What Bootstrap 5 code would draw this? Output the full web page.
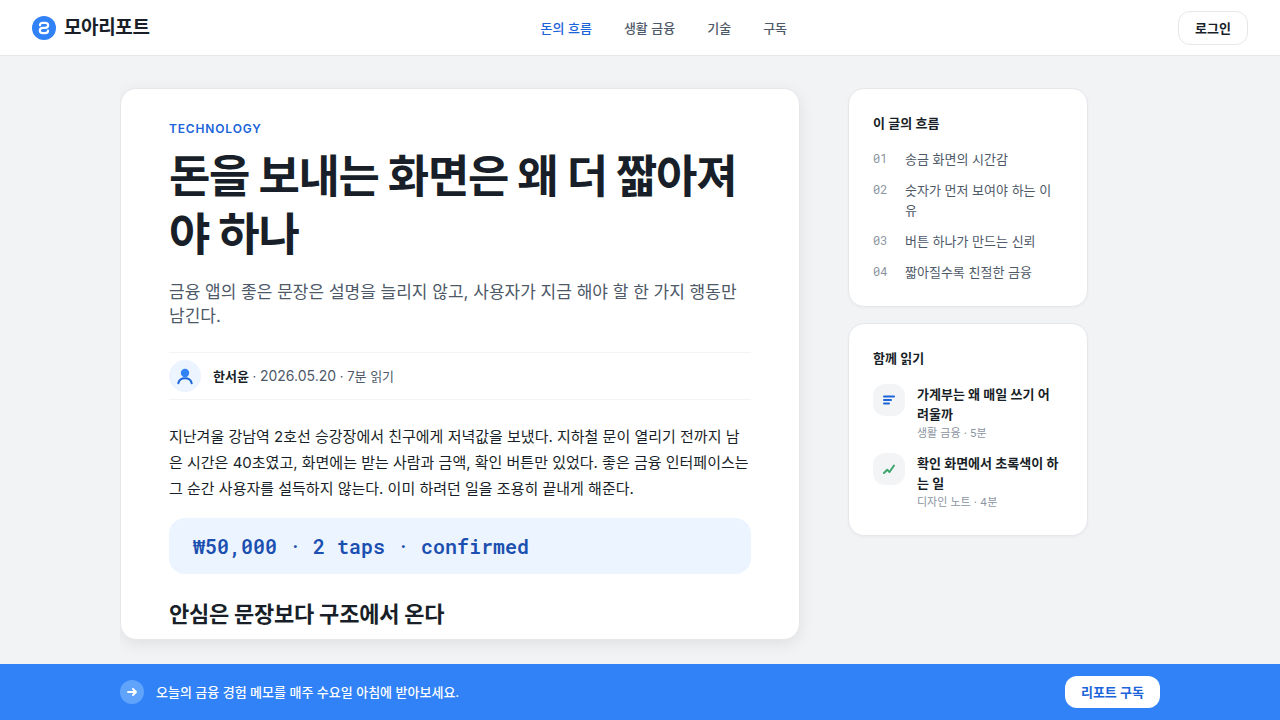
<!DOCTYPE html>
<html lang="ko">
<head>
<meta charset="utf-8">
<meta name="viewport" content="width=device-width, initial-scale=1">
<title>모아리포트</title>
<link href="https://cdn.jsdelivr.net/npm/bootstrap@5.3.0/dist/css/bootstrap.min.css" rel="stylesheet">
<style>
:root{--ink:#191f28;--sub:#4e5968;--mute:#8b95a1;--line:#e5e8eb;--soft:#f2f4f6;--brand:#3182f6;--deep:#1b64da;--tint:#ebf4ff}
body{font-family:Inter,"Noto Sans CJK KR",sans-serif;font-size:13px;line-height:20px;color:var(--ink);background:#f2f3f5}
a{text-decoration:none;color:inherit}
.topbar{min-height:56px;border-bottom:1px solid var(--line);padding:10px 32px}
.brand{font-size:19px;line-height:24px;font-weight:700;letter-spacing:-0.02em}
.topnav{gap:32px;color:var(--sub);font-weight:500}
.topnav .active{color:var(--deep)}
.pill{border-radius:12px;font-size:13px;line-height:20px;font-weight:600;padding:6px 16px}
.pill-line{border:1px solid var(--line);background:#fff;color:var(--ink)}
.pill-white{border:0;background:#fff;color:var(--deep)}
.wrap{width:100%;max-width:1040px}
.page-grid{gap:48px;padding:32px 0 24px}
.story{flex:0 1 680px;min-width:0;background:#fff;border:1px solid var(--line);border-radius:16px;padding:32px 48px 8px;box-shadow:0 4px 16px rgba(0,0,0,.08)}
.kicker{font-size:12px;line-height:15px;font-weight:600;letter-spacing:.07em;color:var(--deep);margin-bottom:12px}
.story h1{font-size:45px;line-height:58px;font-weight:700;letter-spacing:-0.03em}
.deck{font-size:17px;line-height:24px;color:var(--sub)}
.byline{border-top:1px solid var(--soft);border-bottom:1px solid var(--soft);padding:7px 0;color:var(--sub)}
.byline b{font-weight:600;color:var(--ink)}
.byline time{font-size:14px}
.prose{font-size:15px;line-height:26px}
.figure-line{font-family:"Roboto Mono","DejaVu Sans Mono",monospace;font-size:20px;line-height:24px;font-weight:600;color:#1b4fb0;background:var(--tint);border-radius:16px;padding:16px 24px}
.story h2{font-size:22px;line-height:32px;font-weight:700;letter-spacing:-0.01em}
.side{flex:0 0 240px}
.panel{background:#fff;border:1px solid var(--line);border-radius:16px;padding:24px;box-shadow:0 1px 3px rgba(0,0,0,.04)}
.panel h3{font-size:13px;line-height:20px;font-weight:600}
.toc{gap:11px;color:var(--sub)}
.toc a{gap:12px}
.toc span:first-child{flex:0 0 20px;font-family:"Roboto Mono","DejaVu Sans Mono",monospace;font-size:12px;line-height:18px;color:var(--mute)}
.reads{gap:11px}
.reads a{gap:12px}
.tile{flex:0 0 32px;height:32px;border-radius:12px;background:var(--soft)}
.reads strong{font-weight:600;padding-right:3px}
.reads small{font-size:11px;line-height:18px;color:var(--mute)}
.promo{background:var(--brand);color:#fff;padding:12px 0;font-weight:500}
@media (max-width:900px){.page-grid{flex-direction:column;padding:24px 16px}.side{flex:none}.story{flex:none;padding:24px}.topnav{display:none!important}.promo{padding:12px 16px}.story h1{font-size:32px;line-height:40px}}
</style>
</head>
<body class="d-flex flex-column min-vh-100">
<header class="topbar bg-white d-flex align-items-center justify-content-between">
  <a href="#" class="brand d-flex align-items-center gap-2">
    <svg width="24" height="24" viewBox="0 0 24 24" aria-hidden="true"><circle cx="12" cy="12" r="12" fill="#3182f6"/><path d="M8 9.300C8 7.600 9 6.900 11 6.900h2.200c2 0 2.900.8 2.900 2.400s-1 2.500-2.900 2.500h-2.400c-2 0-3 .9-3 2.700s1 2.600 3 2.600H13c2 0 3-.8 3-2.400" fill="none" stroke="#fff" stroke-width="2.200" stroke-linecap="round"/></svg>
    <span>모아리포트</span>
  </a>
  <nav class="topnav d-flex">
    <a href="#" class="active" aria-current="page">돈의 흐름</a><a href="#">생활 금융</a><a href="#">기술</a><a href="#">구독</a>
  </nav>
  <button type="button" class="pill pill-line">로그인</button>
</header>
<main class="wrap mx-auto flex-fill d-flex overflow-hidden">
  <div class="page-grid d-flex flex-fill">
    <article class="story">
      <div class="kicker">TECHNOLOGY</div>
      <h1 class="mb-3">돈을 보내는 화면은 왜 더 짧아져야 하나</h1>
      <p class="deck mb-4">금융 앱의 좋은 문장은 설명을 늘리지 않고, 사용자가 지금 해야 할 한 가지 행동만 남긴다.</p>
      <div class="byline d-flex align-items-center mb-4">
        <svg class="me-2 flex-shrink-0" width="32" height="32" viewBox="0 0 32 32" aria-hidden="true"><circle cx="16" cy="16" r="16" fill="#ebf4ff"/><path d="M9.300 23.200c.7-3.200 3.300-4.900 6.700-4.900s6 1.700 6.700 4.900" fill="none" stroke="#1b64da" stroke-width="2" stroke-linecap="round"/><circle cx="16" cy="13" r="4.200" fill="#3182f6"/></svg>
        <span class="ms-1"><b>한서윤</b> · <time datetime="2026-05-20">2026.05.20</time> · 7분 읽기</span>
      </div>
      <p class="prose mb-3">지난겨울 강남역 2호선 승강장에서 친구에게 저녁값을 보냈다. 지하철 문이 열리기 전까지 남은 시간은 40초였고, 화면에는 받는 사람과 금액, 확인 버튼만 있었다. 좋은 금융 인터페이스는 그 순간 사용자를 설득하지 않는다. 이미 하려던 일을 조용히 끝내게 해준다.</p>
      <div class="figure-line mb-4">₩50,000 · 2 taps · confirmed</div>
      <h2 class="mb-0">안심은 문장보다 구조에서 온다</h2>
    </article>
    <aside class="side d-flex flex-column gap-3">
      <section class="panel">
        <h3 class="mb-3">이 글의 흐름</h3>
        <nav class="toc d-flex flex-column">
          <a href="#" class="d-flex"><span>01</span><span>송금 화면의 시간감</span></a>
          <a href="#" class="d-flex"><span>02</span><span>숫자가 먼저 보여야 하는 이유</span></a>
          <a href="#" class="d-flex"><span>03</span><span>버튼 하나가 만드는 신뢰</span></a>
          <a href="#" class="d-flex"><span>04</span><span>짧아질수록 친절한 금융</span></a>
        </nav>
      </section>
      <section class="panel">
        <h3 class="mb-3">함께 읽기</h3>
        <div class="reads d-grid">
          <a href="#" class="d-flex">
            <span class="tile d-flex align-items-center justify-content-center"><svg width="16" height="16" viewBox="0 0 16 16" aria-hidden="true"><path d="M3 4.500h10M3 8h7M3 11.500h5" fill="none" stroke="#1b64da" stroke-width="2" stroke-linecap="round"/></svg></span>
            <span><strong class="d-block">가계부는 왜 매일 쓰기 어려울까</strong><small class="d-block">생활 금융 · 5분</small></span>
          </a>
          <a href="#" class="d-flex">
            <span class="tile d-flex align-items-center justify-content-center"><svg width="16" height="16" viewBox="0 0 16 16" aria-hidden="true"><path d="M3 12l3.200-3.200L8.500 11 13 4.500" fill="none" stroke="#3fa66e" stroke-width="2" stroke-linecap="round" stroke-linejoin="round"/></svg></span>
            <span><strong class="d-block">확인 화면에서 초록색이 하는 일</strong><small class="d-block">디자인 노트 · 4분</small></span>
          </a>
        </div>
      </section>
    </aside>
  </div>
</main>
<footer class="promo">
  <div class="wrap mx-auto d-flex align-items-center justify-content-between">
    <div class="d-flex align-items-center">
      <svg class="me-2" width="24" height="24" viewBox="0 0 24 24" aria-hidden="true"><circle cx="12" cy="12" r="12" fill="#5fa4fa"/><path d="M8 12h8M13 9l3 3-3 3" fill="none" stroke="#fff" stroke-width="2" stroke-linecap="round" stroke-linejoin="round"/></svg>
      <span class="ms-1">오늘의 금융 경험 메모를 매주 수요일 아침에 받아보세요.</span>
    </div>
    <button type="button" class="pill pill-white">리포트 구독</button>
  </div>
</footer>
<script src="https://cdn.jsdelivr.net/npm/bootstrap@5.3.0/dist/js/bootstrap.bundle.min.js"></script>
</body>
</html>
